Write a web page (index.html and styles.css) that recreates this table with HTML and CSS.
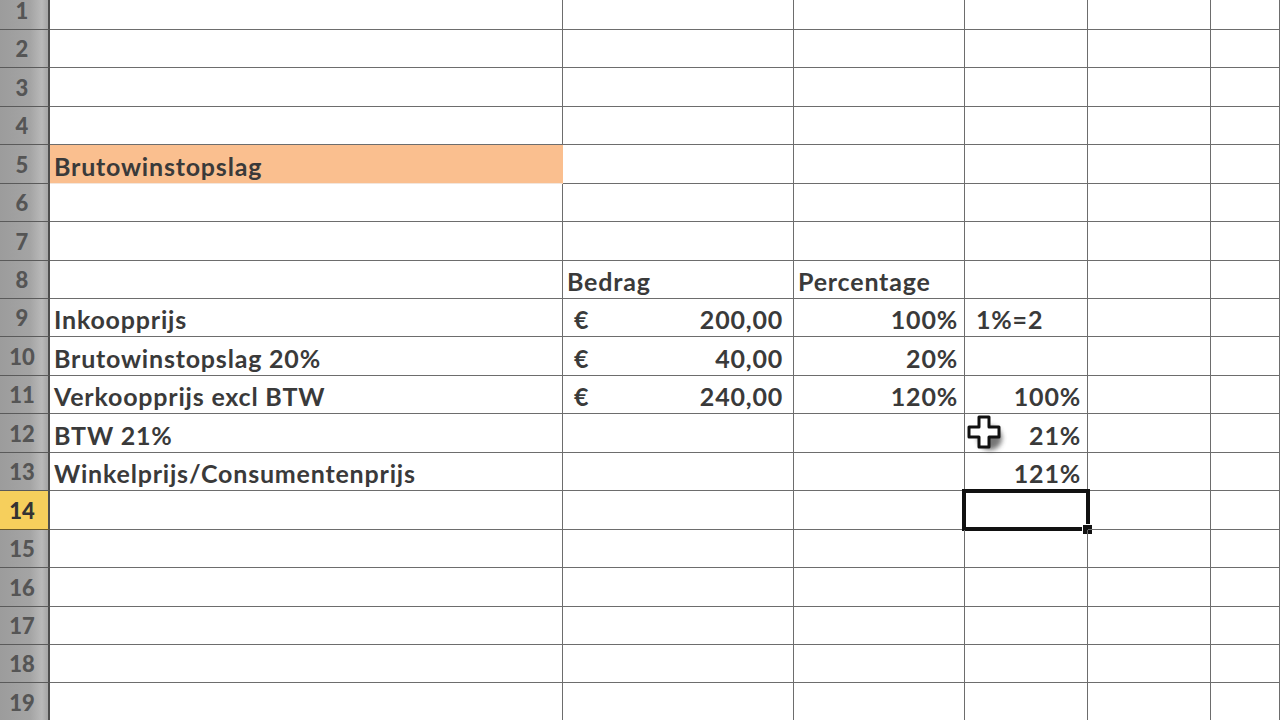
FILE: index.html
```html
<!DOCTYPE html>
<html>
<head>
<meta charset="utf-8">
<link rel="stylesheet" href="styles.css">
</head>
<body>
<div class="sheet">
  <div class="row"><div class="rh">1</div><div class="c"></div><div class="c"></div><div class="c"></div><div class="c"></div><div class="c"></div><div class="c"></div></div>
  <div class="row"><div class="rh">2</div><div class="c"></div><div class="c"></div><div class="c"></div><div class="c"></div><div class="c"></div><div class="c"></div></div>
  <div class="row"><div class="rh">3</div><div class="c"></div><div class="c"></div><div class="c"></div><div class="c"></div><div class="c"></div><div class="c"></div></div>
  <div class="row"><div class="rh">4</div><div class="c"></div><div class="c"></div><div class="c"></div><div class="c"></div><div class="c"></div><div class="c"></div></div>
  <div class="row"><div class="rh">5</div><div class="c fill">Brutowinstopslag</div><div class="c"></div><div class="c"></div><div class="c"></div><div class="c"></div><div class="c"></div></div>
  <div class="row"><div class="rh">6</div><div class="c"></div><div class="c"></div><div class="c"></div><div class="c"></div><div class="c"></div><div class="c"></div></div>
  <div class="row"><div class="rh">7</div><div class="c"></div><div class="c"></div><div class="c"></div><div class="c"></div><div class="c"></div><div class="c"></div></div>
  <div class="row"><div class="rh">8</div><div class="c"></div><div class="c">Bedrag</div><div class="c">Percentage</div><div class="c"></div><div class="c"></div><div class="c"></div></div>
  <div class="row"><div class="rh">9</div><div class="c">Inkoopprijs</div><div class="c acc"><span>€</span><span>200,00</span></div><div class="c num">100%</div><div class="c ind">1%=2</div><div class="c"></div><div class="c"></div></div>
  <div class="row"><div class="rh">10</div><div class="c">Brutowinstopslag 20%</div><div class="c acc"><span>€</span><span>40,00</span></div><div class="c num">20%</div><div class="c"></div><div class="c"></div><div class="c"></div></div>
  <div class="row"><div class="rh">11</div><div class="c">Verkoopprijs excl BTW</div><div class="c acc"><span>€</span><span>240,00</span></div><div class="c num">120%</div><div class="c num">100%</div><div class="c"></div><div class="c"></div></div>
  <div class="row"><div class="rh">12</div><div class="c">BTW 21%</div><div class="c"></div><div class="c"></div><div class="c num cur">21%<svg class="cursor" width="48" height="48" viewBox="0 0 48 48"><defs><filter id="b" x="-40%" y="-40%" width="180%" height="180%"><feGaussianBlur stdDeviation="2.5"/></filter></defs><circle cx="25" cy="25" r="12" fill="#4a4a4a" opacity="0.75" filter="url(#b)"/><path d="M14 4h10v10h10v10h-10v10h-10v-10H4v-10h10z" fill="#fff" stroke="#111" stroke-width="3" stroke-linejoin="round"/></svg></div><div class="c"></div><div class="c"></div></div>
  <div class="row"><div class="rh">13</div><div class="c">Winkelprijs/Consumentenprijs</div><div class="c"></div><div class="c"></div><div class="c num">121%</div><div class="c"></div><div class="c"></div></div>
  <div class="row"><div class="rh active">14</div><div class="c"></div><div class="c"></div><div class="c"></div><div class="c sel"><span class="selbox"></span><span class="handle"></span></div><div class="c"></div><div class="c"></div></div>
  <div class="row"><div class="rh">15</div><div class="c"></div><div class="c"></div><div class="c"></div><div class="c"></div><div class="c"></div><div class="c"></div></div>
  <div class="row"><div class="rh">16</div><div class="c"></div><div class="c"></div><div class="c"></div><div class="c"></div><div class="c"></div><div class="c"></div></div>
  <div class="row"><div class="rh">17</div><div class="c"></div><div class="c"></div><div class="c"></div><div class="c"></div><div class="c"></div><div class="c"></div></div>
  <div class="row"><div class="rh">18</div><div class="c"></div><div class="c"></div><div class="c"></div><div class="c"></div><div class="c"></div><div class="c"></div></div>
  <div class="row"><div class="rh">19</div><div class="c"></div><div class="c"></div><div class="c"></div><div class="c"></div><div class="c"></div><div class="c"></div></div>
</div>
</body>
</html>
```
FILE: styles.css
```css
html, body {
  margin: 0;
  padding: 0;
  background: #fff;
  overflow: hidden;
  width: 1280px;
  height: 720px;
}
.sheet {
  margin-top: -8.5px;
  font-family: Lato, "Liberation Sans", sans-serif;
  font-size: 25px;
  font-weight: 700;
  letter-spacing: 0.8px;
  color: #3a3a3a;
}
.row {
  display: grid;
  grid-template-columns: 50px 513px 231px 171px 123px 123px 69px;
  height: 38.45px;
}
.rh {
  box-sizing: border-box;
  background: linear-gradient(90deg, #9c9c9c 0, #a4a4a4 30px, #b9b9b9 42px, #a8a8a8 47px);
  border-right: 2px solid #4e4e4e;
  border-bottom: 1px solid #5a5a5a;
  color: #555;
  font-weight: 900;
  font-size: 22px;
  letter-spacing: 0;
  display: flex;
  align-items: flex-end;
  justify-content: center;
  padding: 0 4px 5px 0;
  line-height: 26px;
  overflow: hidden;
}
.rh.active {
  background: #f6cf5c;
  color: #333;
  border-bottom-color: #6b5a2a;
}
.c {
  box-sizing: border-box;
  border-right: 1px solid #6d6d6d;
  border-bottom: 1px solid #6d6d6d;
  display: flex;
  align-items: flex-end;
  padding: 0 5px 4px 4px;
  line-height: 26px;
  white-space: nowrap;
  position: relative;
}
.c.fill {
  background: #fabf8f;
  border-right-color: #fabf8f;
  border-bottom-color: #f3e6dc;
}
.c.acc {
  justify-content: space-between;
  padding: 0 10px 4px 11px;
}
.c.num {
  justify-content: flex-end;
  padding-right: 6px;
}
.c.ind {
  padding-left: 11px;
}
.cursor {
  position: absolute;
  left: 0;
  top: -1px;
}
.selbox {
  position: absolute;
  left: -3px;
  top: -2px;
  right: -3px;
  bottom: -2px;
  border: 4px solid #111;
}
.handle {
  position: absolute;
  right: -6px;
  bottom: -6px;
  width: 9px;
  height: 9px;
  background: #111;
  border: 1px solid #fff;
}
```
